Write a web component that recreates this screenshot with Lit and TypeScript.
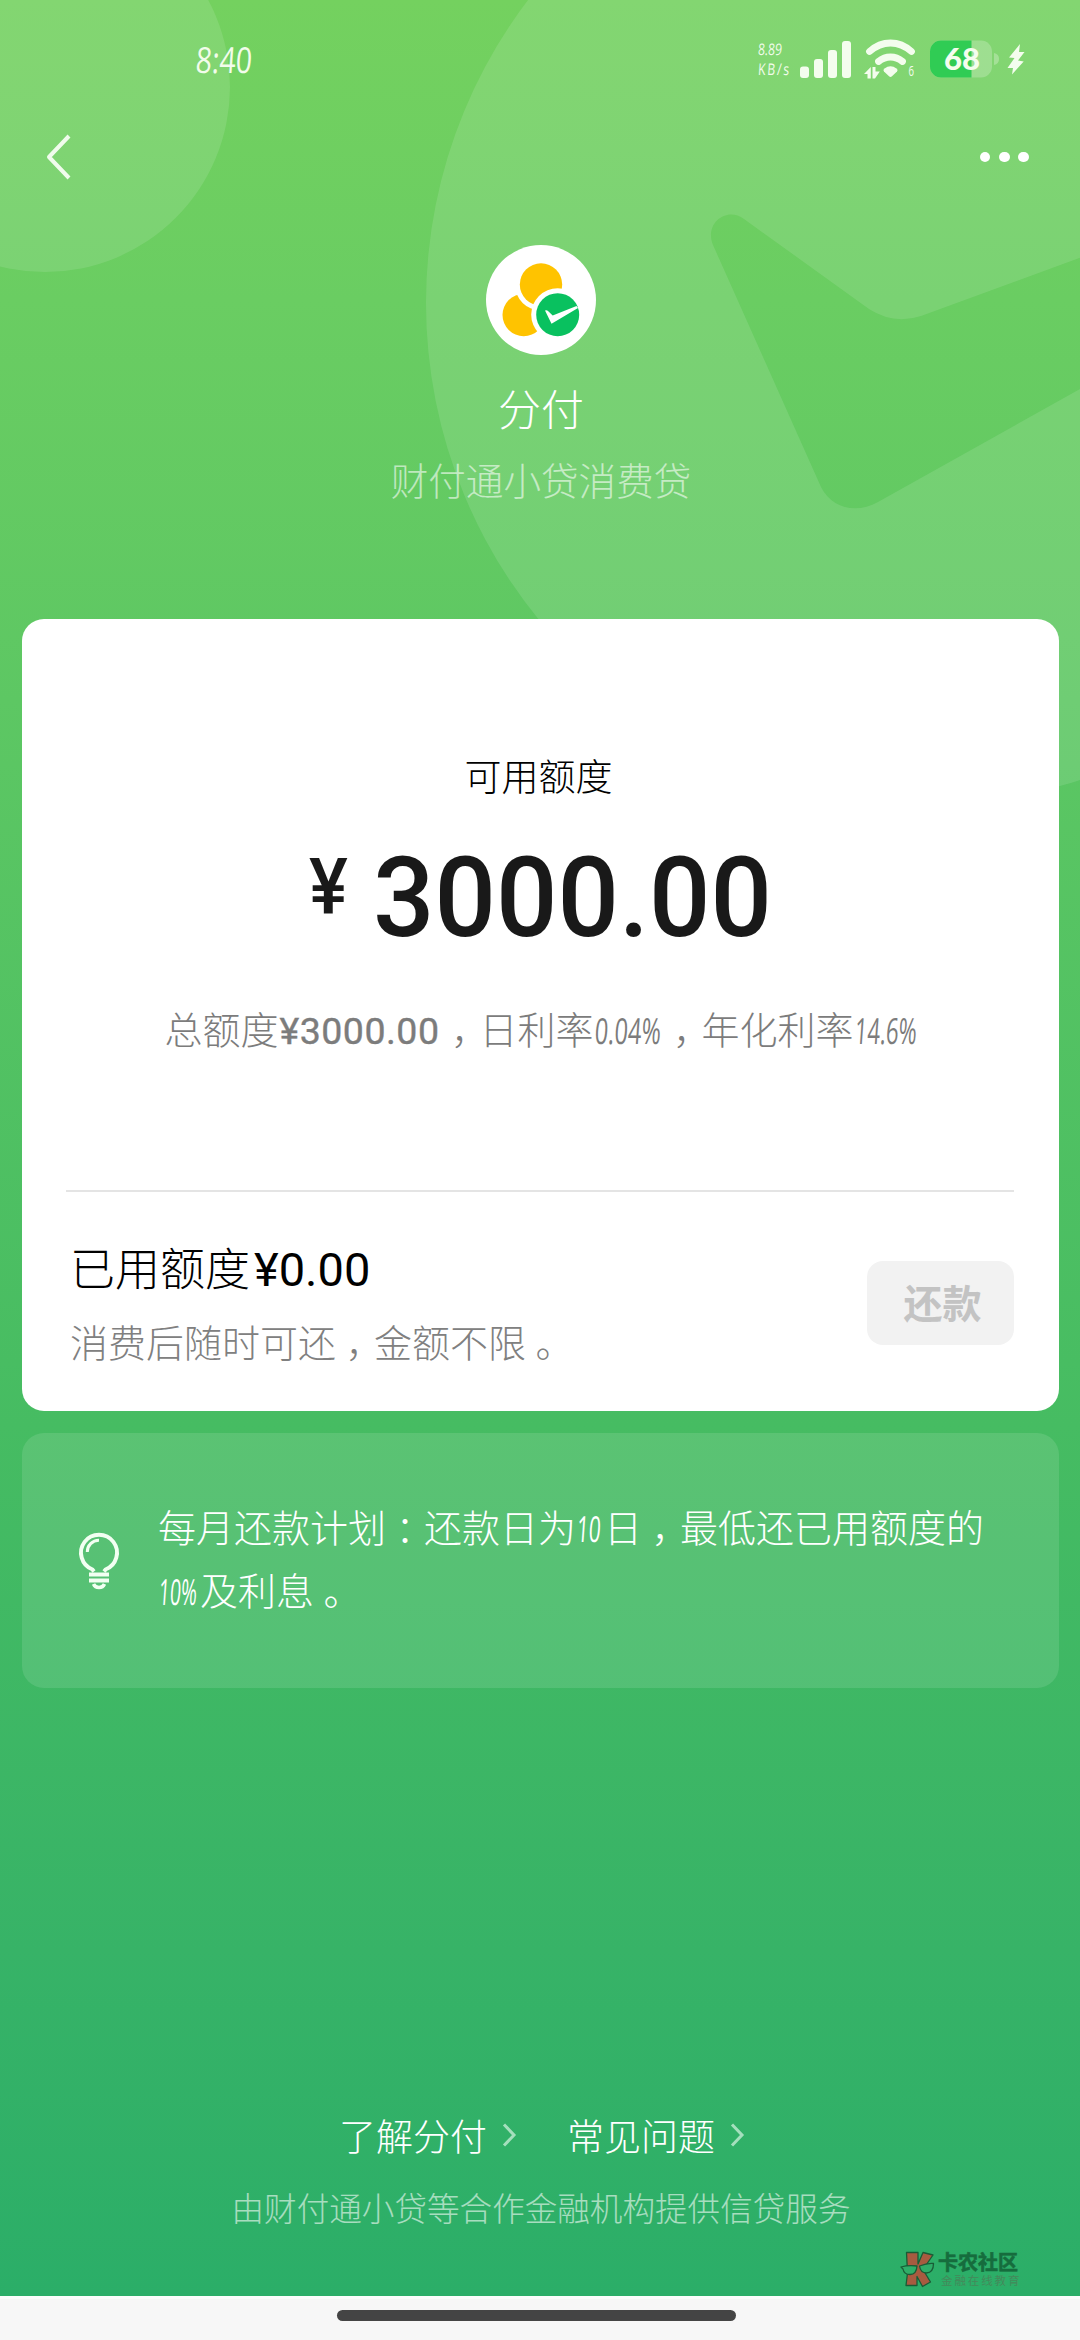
import { LitElement, html, css, svg } from "lit";
import { customElement, property } from "lit/decorators.js";

const CJK = css`"Noto Sans CJK SC", sans-serif`;

@customElement("backdrop-art")
class BackdropArt extends LitElement {
  static styles = css`
    :host { display: block; }
    svg { display: block; }
  `;
  render() {
    return html`<svg width="1080" height="820" viewBox="0 0 1080 820" fill="#fff" fill-opacity=".115">
      <circle cx="45" cy="87" r="185"></circle>
      <path fill-rule="evenodd" d="M1428 303a501 501 0 1 1-1002 0a501 501 0 1 1 1002 0Z
        M744 219L869 309Q894 325 921 316L1180 221V333L878 502C857 514 832 509 821 487L713 245C704 223 727 206 744 219Z"></path>
    </svg>`;
  }
}

@customElement("status-bar")
class StatusBar extends LitElement {
  static styles = css`
    :host {
      display: flex; justify-content: space-between; box-sizing: border-box;
      height: 118px; padding: 36px 49px 0 196px; color: #f2fceb;
      font-family: "Open Sans", sans-serif;
    }
    .time { font-size: 36px; line-height: 47px; font-weight: 400; height: 48px; transform: scaleX(.79) skewX(-5deg); transform-origin: left center; }
    .right { display: flex; align-items: flex-start; height: 48px; }
    .speed { width: 41px; font-size: 16px; line-height: 19.500px; padding-top: 4px; }
    .speed div { transform: scaleX(.76) skewX(-5deg); transform-origin: left; white-space: nowrap; }
    .speed .unit { letter-spacing: 2.500px; }
    svg { display: block; }
  `;
  render() {
    return html`
      <div class="time">8:40</div>
      <div class="right">
        <div class="speed"><div>8.89</div><div class="unit">KB/s</div></div>
        <svg width="232" height="48" viewBox="799 36 232 48" fill="#f4fdee">
          <rect x="800" y="66.500" width="9" height="11.500" rx="3"></rect>
          <rect x="814" y="59" width="9" height="19" rx="3"></rect>
          <rect x="828" y="50" width="9" height="28" rx="3"></rect>
          <rect x="842" y="41" width="9" height="37" rx="3"></rect>
          <g fill="none" stroke="#f4fdee" stroke-width="6.800" stroke-linecap="round">
            <path d="M869.500 51.500Q879 43 890.500 43T911.500 51.500"></path>
            <path d="M878.500 61.500Q884 57 890.500 57T902.500 61.500"></path>
          </g>
          <path d="M884.500 68.500Q890.500 64 896.500 68.500Q898.500 70 897 71.500L892 76.300Q890.500 77.500 889 76.300L884 71.500Q882.500 70 884.500 68.500Z"></path>
          <path d="M864 74L870.800 67V78.500H867.500V74ZM872.500 67H875.500V71.500H879.800L875 78.500H872.500Z"></path>
          <text x="908.500" y="76" font-size="14" font-family="Open Sans" textLength="5.500" lengthAdjust="spacingAndGlyphs">6</text>
          <rect x="930" y="40.500" width="62" height="37" rx="11" fill-opacity=".25"></rect>
          <path fill="#30cc54" d="M941 40.500H971.500V77.500H941A11 11 0 0 1 930 66.500V51.500A11 11 0 0 1 941 40.500Z"></path>
          <path fill-opacity=".3" d="M994 53Q999 54 999 59T994 65Z"></path>
          <text x="944" y="70" font-size="29.500" font-weight="900" font-family="Lato" textLength="36" lengthAdjust="spacingAndGlyphs">68</text>
          <path d="M1020 44L1009 57.500L1014.500 58L1007.500 68H1013L1012 74.500L1023.700 61.500L1018 60.500L1024.500 52H1019Z"></path>
        </svg>
      </div>`;
  }
}

@customElement("nav-bar")
class NavBar extends LitElement {
  static styles = css`
    :host { display: flex; justify-content: space-between; align-items: center; height: 78px; padding: 0 51px 0 45px; }
    .dots { display: flex; gap: 8.500px; }
    .dots span { width: 10.800px; height: 10.800px; border-radius: 50%; background: #fff; }
  `;
  render() {
    return html`
      <svg width="26" height="46" viewBox="0 0 26 46" fill="none" stroke="#f0fcec" stroke-width="4" stroke-linejoin="round">
        <path d="M24 2L4 23L24 44"></path>
      </svg>
      <div class="dots"><span></span><span></span><span></span></div>`;
  }
}

@customElement("product-head")
class ProductHead extends LitElement {
  static styles = css`
    :host { display: flex; flex-direction: column; align-items: center; height: 374px; padding: 0 0 0 2px; color: #fff; font-family: ${CJK}; }
    svg { display: block; flex: none; }
    .name { font-size: 43px; line-height: 56px; margin-top: 24px; font-weight: 300; }
    .sub { font-size: 37.600px; line-height: 50px; margin-top: 19px; font-weight: 300; opacity: .58; }
  `;
  render() {
    return html`
      <svg width="110" height="110" viewBox="486 245 110 110">
        <circle cx="541" cy="300" r="55" fill="#fff"></circle>
        <circle cx="523.700" cy="315" r="21.200" fill="#ffc300"></circle>
        <circle cx="541" cy="284.500" r="26" fill="#fff"></circle>
        <circle cx="541" cy="284.500" r="21.200" fill="#ffc300"></circle>
        <circle cx="557.700" cy="314.700" r="26.500" fill="#fff"></circle>
        <circle cx="557.700" cy="314.700" r="21.500" fill="#09c15f"></circle>
        <path fill="#fff" d="M545 310.500Q547 310 548 311L552.700 315.500L576.500 306L578 308L551.500 323.700Z"></path>
      </svg>
      <div class="name">分付</div>
      <div class="sub">财付通小贷消费贷</div>`;
  }
}

/* Digits set narrower than the surrounding ideographs. */
@customElement("slim-number")
class SlimNumber extends LitElement {
  @property() value = "";
  @property({ type: Number }) width = 60;
  static styles = css`
    :host { display: inline-block; }
    svg { display: block; overflow: visible; }
    text { font-family: "Open Sans", sans-serif; font-weight: 400; font-size: 36px; }
  `;
  render() {
    return html`<svg width=${this.width} height="27" fill="currentColor">
      ${svg`<text x="2" y="27" transform="skewX(-4)" textLength=${this.width - 4} lengthAdjust="spacingAndGlyphs">${this.value}</text>`}
    </svg>`;
  }
}

@customElement("quota-card")
class QuotaCard extends LitElement {
  static styles = css`
    :host {
      display: flex; flex-direction: column; box-sizing: border-box; height: 792px; margin: 0 21px 0 22px;
      padding: 0 45px 0 44px; border-radius: 22px; background: #fff; font-family: ${CJK}; color: #000;
    }
    .top { height: 573px; box-sizing: border-box; padding-top: 131px; border-bottom: 2px solid #e4e4e4; display: flex; flex-direction: column; align-items: center; }
    .label { font-size: 37px; line-height: 50px; font-weight: 300; margin-left: -3px; }
    .amount { display: flex; align-items: flex-start; margin: 39px 0 0 11px; font-family: Roboto, sans-serif; font-weight: 500; color: #191919; }
    .yen { font-size: 77px; line-height: 88px; height: 88px; padding-top: 4px; width: 64px; transform: scaleX(.95); transform-origin: left; }
    .num { font-size: 111px; line-height: 119px; transform: scaleX(.975); transform-origin: left; }
    .detail { font-size: 38px; line-height: 50px; margin: 45px 0 0 4px; font-weight: 300; color: #7c7c7c; white-space: nowrap; }
    .detail .digits { font-family: Roboto, sans-serif; font-weight: 400; font-size: 37.500px; letter-spacing: .5px; margin: 0 2px 0 1px; -webkit-text-stroke: .4px currentColor; }
    .mark { font-feature-settings: "halt"; padding: 0 .25em; }
    .bottom { flex: 1; display: flex; justify-content: space-between; align-items: flex-start; padding-left: 4px; }
    .used { font-size: 45px; line-height: 60px; margin-top: 45px; font-weight: 300; }
    .used .digits { font-family: Roboto, sans-serif; font-size: 47px; font-weight: 400; margin-left: 4px; }
    .hint { font-size: 38px; line-height: 50px; margin-top: 16px; font-weight: 300; color: #808080; }
    .repay { width: 147px; height: 84px; margin-top: 69px; border: 0; padding: 0 0 5px 4px; border-radius: 16px; background: #f2f2f2; color: #c3c3c3; font: 700 39px/50px ${CJK}; }
  `;
  render() {
    return html`
      <div class="top">
        <div class="label">可用额度</div>
        <div class="amount"><span class="yen">¥</span><span class="num">3000.00</span></div>
        <div class="detail">总额度<span class="digits">¥3000.00</span><span class="mark">，</span>日利率<slim-number value="0.04%" width="70"></slim-number><span class="mark">，</span>年化利率<slim-number value="14.6%" width="66"></slim-number></div>
      </div>
      <div class="bottom">
        <div>
          <div class="used">已用额度<span class="digits">¥0.00</span></div>
          <div class="hint">消费后随时可还<span class="mark">，</span>金额不限<span class="mark">。</span></div>
        </div>
        <button class="repay">还款</button>
      </div>`;
  }
}

@customElement("plan-tip")
class PlanTip extends LitElement {
  static styles = css`
    :host {
      display: flex; box-sizing: border-box; height: 255px; margin: 22px 21px 0 22px; padding: 62px 0 0 55px;
      border-radius: 22px; background: rgba(255, 255, 255, .115); color: #fff; font-family: ${CJK};
    }
    svg { flex: none; margin-top: 36px; }
    .text { margin-left: 37px; font-size: 38px; line-height: 62.500px; font-weight: 300; white-space: nowrap; }
    .mark { font-feature-settings: "halt"; padding: 0 .25em; }
  `;
  render() {
    return html`
      <svg width="44" height="60" viewBox="77 1531 44 60" fill="none" stroke="#f2fff2" stroke-width="3.900">
        <path d="M94 1571.500L92.500 1569.500A18 18 0 1 1 105.500 1569.500L104 1571.500"></path>
        <path stroke-width="3" d="M87.300 1552A11.500 11.500 0 0 1 99 1540.300"></path>
        <path d="M89 1574.500H109M89 1580.500H109"></path>
        <path stroke-width="3.500" d="M93.500 1584Q95 1587.500 99 1587.500T104.500 1584"></path>
      </svg>
      <div class="text">
        <div>每月还款计划<span class="mark">：</span>还款日为<slim-number value="10" width="28"></slim-number>日<span class="mark">，</span>最低还已用额度的</div>
        <div><slim-number value="10%" width="42"></slim-number>及利息<span class="mark">。</span></div>
      </div>`;
  }
}

@customElement("page-foot")
class PageFoot extends LitElement {
  static styles = css`
    :host { display: flex; flex-direction: column; color: #fff; font-family: ${CJK}; height: 608px; }
    .links { display: flex; gap: 50px; margin: 422px 0 0 339px; }
    .link { display: flex; align-items: center; gap: 15px; font-size: 37px; line-height: 50px; font-weight: 300; white-space: nowrap; }
    .note { text-align: center; font-size: 32.600px; line-height: 44px; margin: 25px 0 0 2px; font-weight: 300; opacity: .58; }
    .brand { display: flex; gap: 3px; margin: 22px 0 0 900px; }
    .brand-name { font-size: 20px; line-height: 21px; font-weight: 700; color: #166c3d; -webkit-text-stroke: .6px #166c3d; white-space: nowrap; }
    .brand-sub { font-size: 11.500px; line-height: 15px; letter-spacing: 1.900px; color: #44895a; padding: 1px 0 0 3px; white-space: nowrap; }
  `;
  private link(label: string) {
    return html`<div class="link">${label}<svg width="15" height="24" viewBox="0 0 15 24" fill="none" stroke="#a4dfbd" stroke-width="3"><path d="M2 1.500L12 12L2 22.500"></path></svg></div>`;
  }
  render() {
    return html`
      <div class="links">${this.link("了解分付")}${this.link("常见问题")}</div>
      <div class="note">由财付通小贷等合作金融机构提供信贷服务</div>
      <div class="brand">
        <svg width="35" height="37" viewBox="0 0 35 37" stroke="#195c36" stroke-width="1.300" stroke-linejoin="round">
          <path fill="#a75b40" d="M6.500 1.500H18V13L23 1.500L33 4L23 18.500L30.500 31L22.500 35.500L17 25.500V34.500H6L7.500 22Z"></path>
          <path fill="#2fae68" d="M1 16Q8 14 17 15Q16.500 23.500 10 23.500Q4 23.500 3 18ZM19.500 15Q27 12 33.500 12.500Q33.500 21.500 26.500 22Q20.500 22 19.500 15Z"></path>
        </svg>
        <div><div class="brand-name">卡农社区</div><div class="brand-sub">金融在线教育</div></div>
      </div>`;
  }
}

@customElement("app-root")
class AppRoot extends LitElement {
  static styles = css`
    :host { display: block; width: 1080px; height: 2340px; overflow: hidden; }
    .screen { position: relative; height: 2296px; background: linear-gradient(#74d15f 0, #6acd62 300px, #5dc763 700px, #46bc62 1425px, #37b367 1950px, #2bae68 2296px); }
    .art { position: absolute; left: 0; top: 0; }
    .content { position: relative; display: flex; flex-direction: column; height: 2296px; }
    .spacer { height: 49px; flex: none; }
    .home { height: 44px; box-sizing: border-box; border-top: 3px solid #fbfdfc; background: #f7f7f7; padding: 11px 0 0 337px; }
    .handle { width: 399px; height: 11px; border-radius: 6px; background: #444; }
  `;
  render() {
    return html`
      <div class="screen">
        <backdrop-art class="art"></backdrop-art>
        <div class="content">
          <status-bar></status-bar>
          <nav-bar></nav-bar>
          <div class="spacer"></div>
          <product-head></product-head>
          <quota-card></quota-card>
          <plan-tip></plan-tip>
          <page-foot></page-foot>
        </div>
      </div>
      <div class="home"><div class="handle"></div></div>`;
  }
}
